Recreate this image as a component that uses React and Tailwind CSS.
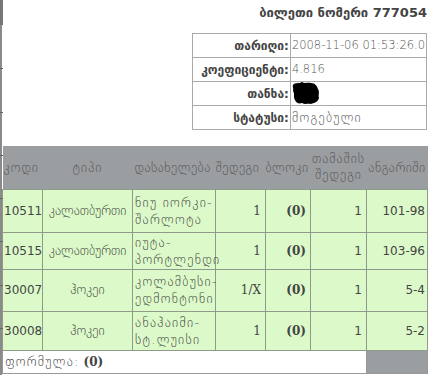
export default function App() {
    const rows = [
        { code: '10511', type: 'კალათბურთი', name: ['ნიუ იორკი-', 'შარლოტა'], res: '1', block: '(0)', game: '1', score: '101-98', h: 'h-[43px]' },
        { code: '10515', type: 'კალათბურთი', name: ['იუტა-', 'პორტლენდი'], res: '1', block: '(0)', game: '1', score: '103-96', h: 'h-[37px]' },
        { code: '30007', type: 'ჰოკეი', name: ['კოლამბუსი-', 'ედმონტონი'], res: '1/X', block: '(0)', game: '1', score: '5-4', h: 'h-[42px]' },
        { code: '30008', type: 'ჰოკეი', name: ['ანაჰაიმი-', 'სტ.ლუისი'], res: '1', block: '(0)', game: '1', score: '5-2', h: 'h-[39px]' },
    ];

    const info = [
        { label: 'თარიღი:', value: '2008-11-06 01:53:26.0', cls: 'text-[11.5px]' },
        { label: 'კოეფიციენტი:', value: '4.816', cls: 'text-[11.5px]' },
        { label: 'თანხა:', value: null, cls: '' },
        { label: 'სტატუსი:', value: 'მოგებული', cls: 'text-[13px] tracking-[1.3px]' },
    ];

    // little marks on the page edge
    const ticks = ['top-[68px]', 'top-[112px]', 'top-[155px]', 'top-[198px]', 'top-[241px]', 'top-[285px]', 'top-[328px]'];

    return (
        <div className="relative h-[375px] w-[428px] overflow-hidden bg-white font-['DejaVu_Sans',sans-serif] text-[#444]">
            <div className="absolute left-0 top-0 h-full w-[2px] bg-[#8a8a8a]" />
            <div className="absolute left-0 top-0 h-[25px] w-[3px] bg-[#777]" />
            {ticks.map((t) => (
                <div key={t} className={`absolute left-0 ${t} h-[1px] w-[3px] bg-[#666]`} />
            ))}

            <div className="pl-[2px] pr-[1px]">
                <div className="flex h-[25px] items-center justify-end text-[13px] font-bold text-[#444]">
                    ბილეთი ნომერი 777054
                </div>

                {/* ticket info */}
                <div className="mt-[8px] flex justify-end">
                    <table className="w-[235px] border-collapse border border-[#999]">
                        <tbody>
                            {info.map((r) => (
                                <tr key={r.label} className="h-[24px]">
                                    <td className="w-[103px] whitespace-nowrap border border-[#aaa] px-[1px] text-right text-[12px] font-bold text-[#444]">
                                        {r.label}
                                    </td>
                                    <td className={`whitespace-nowrap border border-[#aaa] px-[1px] font-extralight text-[#555] ${r.cls}`}>
                                        {r.value ?? (
                                            <svg width="28" height="23" viewBox="0 0 28 23" className="block">
                                                <path
                                                    d="M1 3 C3 0 7 2 10 0 C13 2 16 0 19 1 C23 1 25 4 26 7 C28 10 26 13 27 16 C26 20 22 21 19 22 C16 21 13 23 10 21 C7 22 4 21 3 18 C1 15 3 12 1 9 C2 7 0 5 1 3 Z"
                                                    fill="#000"
                                                />
                                            </svg>
                                        )}
                                    </td>
                                </tr>
                            ))}
                        </tbody>
                    </table>
                </div>

                {/* bets */}
                <table className="mt-[16px] w-[425px] table-fixed border-collapse text-[12px]">
                    <colgroup>
                        <col className="w-[40px]" />
                        <col className="w-[90px]" />
                        <col className="w-[83px]" />
                        <col className="w-[50px]" />
                        <col className="w-[45px]" />
                        <col className="w-[56px]" />
                        <col className="w-[61px]" />
                    </colgroup>
                    <thead>
                        <tr className="h-[43px] bg-[#9b9ea1] text-[13px] tracking-[1px] text-[#555]">
                            <th className="whitespace-nowrap px-[1px] text-left font-extralight">კოდი</th>
                            <th className="text-center font-extralight">ტიპი</th>
                            <th className="whitespace-nowrap px-[2px] text-left font-extralight tracking-[0.5px]">დასახელება</th>
                            <th className="whitespace-nowrap text-left font-extralight tracking-[0.5px]">შედეგი</th>
                            <th className="whitespace-nowrap text-left font-extralight tracking-[0.5px]">ბლოკი</th>
                            <th className="text-center font-extralight leading-[16px]">
                                თამაშის
                                <br />
                                შედეგი
                            </th>
                            <th className="whitespace-nowrap text-center font-extralight tracking-[0.5px]">ანგარიში</th>
                        </tr>
                    </thead>
                    <tbody>
                        {rows.map((r) => (
                            <tr key={r.code} className={`${r.h} bg-[#dcfac9]`}>
                                <td className="border border-[#8f9a88] px-[1px]">{r.code}</td>
                                <td className="whitespace-nowrap border border-[#8f9a88] text-center text-[13px] font-extralight">{r.type}</td>
                                <td className="whitespace-nowrap border border-[#8f9a88] px-[2px] text-[13px] font-extralight leading-[17px] tracking-[1.3px]">
                                    {r.name[0]}
                                    <br />
                                    {r.name[1]}
                                </td>
                                <td className="border border-[#8f9a88] px-[4px] text-right font-['DejaVu_Serif',serif]">{r.res}</td>
                                <td className="border border-[#8f9a88] px-[4px] text-right font-['DejaVu_Serif',serif] font-bold">{r.block}</td>
                                <td className="border border-[#8f9a88] px-[4px] text-right">{r.game}</td>
                                <td className="border border-[#8f9a88] px-[2px] text-right">{r.score}</td>
                            </tr>
                        ))}
                        <tr className="h-[23px]">
                            <td colSpan={6} className="border border-[#999] bg-white px-[2px]">
                                <span className="text-[13px] font-extralight tracking-[1.3px]">ფორმულა:</span>{' '}
                                <span className="font-['DejaVu_Serif',serif] font-bold">(0)</span>
                            </td>
                            <td className="border border-[#999] bg-[#9b9ea1]" />
                        </tr>
                    </tbody>
                </table>
            </div>
        </div>
    );
}
